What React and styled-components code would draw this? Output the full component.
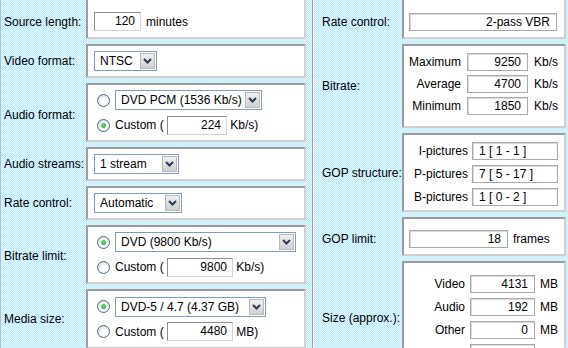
import React from 'react';
import styled, { createGlobalStyle } from 'styled-components';

const Global = createGlobalStyle`
  html, body { margin: 0; padding: 0; }
  body {
    width: 568px;
    height: 348px;
    overflow: hidden;
    font-family: "Liberation Sans", Arial, sans-serif;
    font-size: 12px;
    color: #000;
    background-color: #d0f1fd;
    background-image: repeating-conic-gradient(#bfeafb 0 25%, #e2f8ff 0 50%);
    background-size: 2px 2px;
  }
`;

const Page = styled.div`
  display: flex;
  height: 348px;
  overflow: hidden;
  border-left: 1px solid #a9c2cf;
`;

const Pane = styled.div`
  display: flex;
  flex-direction: column;
  gap: 5px;
  width: ${p => p.$w}px;
  margin-top: -6px;
  flex: none;
`;

const Divider = styled.div`
  width: 12px;
  flex: none;
  display: flex;
  justify-content: center;
  &::before {
    content: "";
    width: 1px;
    background: #a0a0a0;
    box-shadow: 1px 0 0 #fff;
  }
`;

const Row = styled.div`
  display: grid;
  grid-template-columns: ${p => p.$label}px 1fr;
`;

const Label = styled.div`
  display: flex;
  align-items: center;
  padding-left: ${p => p.$pl ?? 3}px;
  padding-top: ${p => p.$pt || 0}px;
  white-space: nowrap;
`;

const Box = styled.div`
  background: #fff;
  border: 2px solid;
  border-color: #9c9c9c #cfcfcf #cfcfcf #9c9c9c;
  height: ${p => p.$h}px;
  box-sizing: border-box;
  padding: ${p => p.$pad || '0 6px'};
  display: flex;
  flex-direction: column;
  justify-content: ${p => p.$justify || 'center'};
  gap: ${p => p.$gap ?? 4}px;
  overflow: hidden;
`;

const Line = styled.div`
  display: flex;
  align-items: center;
  gap: ${p => p.$gap ?? 5}px;
  height: ${p => p.$h || 21}px;
  flex: none;
  white-space: nowrap;
`;

const Radio = styled.span`
  width: 13px;
  height: 13px;
  box-sizing: border-box;
  border-radius: 50%;
  border: 1px solid #3c6a8e;
  background: radial-gradient(circle at 65% 65%, #ffffff 0 30%, #dcdcd5 80%);
  margin: 0 5px 0 3px;
  flex: none;
  display: flex;
  align-items: center;
  justify-content: center;
  &::after {
    content: "";
    width: 5px;
    height: 5px;
    border-radius: 50%;
    background: radial-gradient(circle at 40% 40%, #6fe26b, #21a121);
    display: ${p => (p.$on ? 'block' : 'none')};
  }
`;

const Select = styled.div`
  width: ${p => p.$w}px;
  height: 20px;
  box-sizing: border-box;
  border: 1px solid #7f9db9;
  background: #fff;
  display: flex;
  align-items: center;
  padding: 1px;
  flex: none;
`;

const SelText = styled.span`
  flex: 1;
  padding-left: 4px;
  white-space: nowrap;
  overflow: hidden;
`;

const ArrowBtn = styled.span`
  width: 15px;
  height: 16px;
  box-sizing: border-box;
  border: 1px solid #b8b8b8;
  background: linear-gradient(#f0f0f0, #cfcfcf);
  display: flex;
  align-items: center;
  justify-content: center;
  flex: none;
`;

const Input = styled.div`
  width: ${p => p.$w}px;
  height: 19px;
  box-sizing: border-box;
  border: 1px solid;
  border-color: #8e8e8e #d4d4d4 #d4d4d4 #8e8e8e;
  background: #fff;
  text-align: ${p => p.$align || 'right'};
  padding: 0 5px;
  line-height: 17px;
  flex: none;
`;

const RoField = styled.div`
  height: 18px;
  box-sizing: border-box;
  border: 1px solid #a9a9a9;
  box-shadow: inset 1px 1px 0 #dadada;
  background: #fff;
  text-align: ${p => p.$align || 'right'};
  padding: 0 6px;
  line-height: 16px;
  white-space: nowrap;
  ${p => (p.$w ? `width: ${p.$w}px; flex: none;` : 'flex: 1;')}
`;

const SubGrid = styled.div`
  display: grid;
  grid-template-columns: 1fr ${p => p.$field}px ${p => (p.$unit ? 'auto' : '')};
  grid-auto-rows: 18px;
  column-gap: ${p => p.$gap ?? 6}px;
  row-gap: ${p => p.$rowGap ?? 4}px;
  align-items: center;
`;

const SubLabel = styled.span`
  text-align: right;
  white-space: nowrap;
`;

const Chevron = () => (
  <svg width="9" height="6" viewBox="0 0 9 6">
    <path d="M1 1 L4.5 4.5 L8 1" fill="none" stroke="#2a3a5a" strokeWidth="2" />
  </svg>
);

const Sel = ({ w, children }) => (
  <Select $w={w}>
    <SelText>{children}</SelText>
    <ArrowBtn><Chevron /></ArrowBtn>
  </Select>
);

export default function App() {
  return (
    <>
      <Global />
      <Page>
        <Pane $w={305}>
          <Row $label={85}>
            <Label $pt={10}>Source length:</Label>
            <Box $h={45} $justify="flex-end" $pad="0 6px 5px">
              <Line>
                <Input $w={47}>120</Input>
                <span>minutes</span>
              </Line>
            </Box>
          </Row>
          <Row $label={85}>
            <Label>Video format:</Label>
            <Box $h={34}>
              <Line><Sel w={63}>NTSC</Sel></Line>
            </Box>
          </Row>
          <Row $label={85}>
            <Label $pt={4}>Audio format:</Label>
            <Box $h={59}>
              <Line $gap={0}><Radio /><Sel w={147}>DVD PCM (1536 Kb/s)</Sel></Line>
              <Line $gap={0}><Radio $on /><span>Custom (&nbsp;</span><Input $w={60}>224</Input><span>&nbsp;Kb/s)</span></Line>
            </Box>
          </Row>
          <Row $label={85}>
            <Label>Audio streams:</Label>
            <Box $h={34}>
              <Line><Sel w={85}>1 stream</Sel></Line>
            </Box>
          </Row>
          <Row $label={85}>
            <Label>Rate control:</Label>
            <Box $h={34}>
              <Line><Sel w={88}>Automatic</Sel></Line>
            </Box>
          </Row>
          <Row $label={85}>
            <Label $pt={2}>Bitrate limit:</Label>
            <Box $h={59}>
              <Line $gap={0}><Radio $on /><Sel w={181}>DVD (9800 Kb/s)</Sel></Line>
              <Line $gap={0}><Radio /><span>Custom (&nbsp;</span><Input $w={66}>9800</Input><span>&nbsp;Kb/s)</span></Line>
            </Box>
          </Row>
          <Row $label={85}>
            <Label>Media size:</Label>
            <Box $h={60}>
              <Line $gap={0}><Radio $on /><Sel w={151}>DVD-5 / 4.7 (4.37 GB)</Sel></Line>
              <Line $gap={0}><Radio /><span>Custom (&nbsp;</span><Input $w={66}>4480</Input><span>&nbsp;MB)</span></Line>
            </Box>
          </Row>
        </Pane>
        <Divider />
        <Pane $w={248}>
          <Row $label={84}>
            <Label $pl={4} $pt={10}>Rate control:</Label>
            <Box $h={45} $justify="flex-end" $pad="0 7px 5px 5px">
              <Line><RoField>2-pass VBR</RoField></Line>
            </Box>
          </Row>
          <Row $label={84}>
            <Label $pl={4}>Bitrate:</Label>
            <Box $h={84} $justify="flex-start" $pad="7px 6px 0 5px">
              <SubGrid $field={61} $unit $rowGap={4}>
                <SubLabel>Maximum</SubLabel><RoField>9250</RoField><span>Kb/s</span>
                <SubLabel>Average</SubLabel><RoField>4700</RoField><span>Kb/s</span>
                <SubLabel>Minimum</SubLabel><RoField>1850</RoField><span>Kb/s</span>
              </SubGrid>
            </Box>
          </Row>
          <Row $label={84}>
            <Label $pl={4}>GOP structure:</Label>
            <Box $h={79} $justify="flex-start" $pad="7px 6px 0 5px">
              <SubGrid $field={86} $gap={4} $rowGap={5}>
                <SubLabel>I-pictures</SubLabel><RoField $align="left">1 [ 1 - 1 ]</RoField>
                <SubLabel>P-pictures</SubLabel><RoField $align="left">7 [ 5 - 17 ]</RoField>
                <SubLabel>B-pictures</SubLabel><RoField $align="left">1 [ 0 - 2 ]</RoField>
              </SubGrid>
            </Box>
          </Row>
          <Row $label={84}>
            <Label $pl={4} $pt={4}>GOP limit:</Label>
            <Box $h={39} $pad="4px 6px 0 5px">
              <Line $gap={5}><RoField $w={99}>18</RoField><span>frames</span></Line>
            </Box>
          </Row>
          <Row $label={84}>
            <Label $pl={4} $pt={4}>Size (approx.):</Label>
            <Box $h={110} $justify="flex-start" $pad="12px 6px 0 5px">
              <SubGrid $field={65} $unit $gap={5} $rowGap={5}>
                <SubLabel>Video</SubLabel><RoField>4131</RoField><span>MB</span>
                <SubLabel>Audio</SubLabel><RoField>192</RoField><span>MB</span>
                <SubLabel>Other</SubLabel><RoField>0</RoField><span>MB</span>
                <SubLabel /><RoField /><span />
              </SubGrid>
            </Box>
          </Row>
        </Pane>
      </Page>
    </>
  );
}
